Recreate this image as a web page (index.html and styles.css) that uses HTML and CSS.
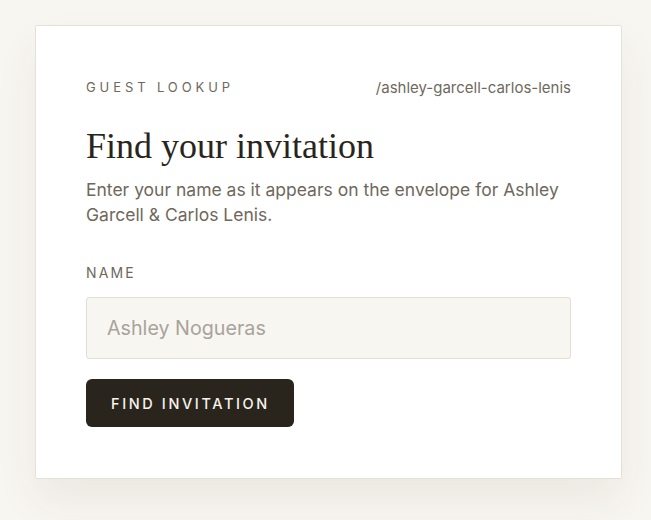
FILE: index.html
```html
<!DOCTYPE html>
<html lang="en">
<head>
<meta charset="utf-8">
<title>Guest Lookup</title>
<link rel="stylesheet" href="styles.css">
</head>
<body>
<main class="card">
  <div class="card-head">
    <span class="eyebrow">Guest Lookup</span>
    <span class="slug">/ashley-garcell-carlos-lenis</span>
  </div>
  <h1 class="title">Find your invitation</h1>
  <p class="lead">Enter your name as it appears on the envelope for Ashley Garcell &amp; Carlos Lenis.</p>
  <form class="form">
    <label class="label" for="name">Name</label>
    <input class="input" id="name" type="text" placeholder="Ashley Nogueras">
    <button class="button" type="button">Find invitation</button>
  </form>
</main>
</body>
</html>
```
FILE: styles.css
```css
* { box-sizing: border-box; }
html, body { margin: 0; }
body {
  background: #f8f6f1;
  font-family: "Inter", "Liberation Sans", sans-serif;
  padding: 25px 0 0 35px;
  height: 520px;
}
.card {
  width: 587px;
  background: #ffffff;
  border: 1px solid #e6e1d8;
  border-radius: 2px;
  padding: 50px 50px 51px 50px;
  box-shadow: 0 22px 44px rgba(70, 60, 40, 0.07);
}
.card-head {
  display: flex;
  justify-content: space-between;
  align-items: center;
  height: 22px;
}
.eyebrow {
  font-size: 13px;
  letter-spacing: 0.3em;
  text-transform: uppercase;
  color: #6f685d;
  font-weight: 400;
}
.slug {
  font-size: 15px;
  color: #6f685d;
}
.title {
  font-family: "Liberation Serif", "DejaVu Serif", serif;
  font-weight: 400;
  font-size: 36px;
  line-height: 40px;
  color: #2a251c;
  margin: 28px 0 0 0;
}
.lead {
  font-size: 17.5px;
  line-height: 25px;
  color: #6f685d;
  margin: 11px 0 0 0;
}
.form {
  display: flex;
  flex-direction: column;
  align-items: flex-start;
  margin-top: 37px;
}
.label {
  font-size: 14px;
  letter-spacing: 0.15em;
  text-transform: uppercase;
  color: #6f685d;
  font-weight: 400;
  line-height: 18px;
}
.input {
  margin-top: 15px;
  width: 100%;
  height: 62px;
  background: #f8f6f1;
  border: 1px solid #e3ddd2;
  border-radius: 3px;
  padding: 0 20px;
  font-family: "Inter", "Liberation Sans", sans-serif;
  font-size: 19.7px;
  color: #2a251c;
  outline: none;
}
.input::placeholder { color: #a8a39b; }
.button {
  margin-top: 20px;
  height: 48px;
  padding: 0 24.5px 0 25px;
  background: #2a251c;
  color: #f6f3ec;
  border: none;
  border-radius: 6px;
  font-family: "Inter", "Liberation Sans", sans-serif;
  font-size: 14.5px;
  font-weight: 500;
  letter-spacing: 0.18em;
  text-transform: uppercase;
}
```
